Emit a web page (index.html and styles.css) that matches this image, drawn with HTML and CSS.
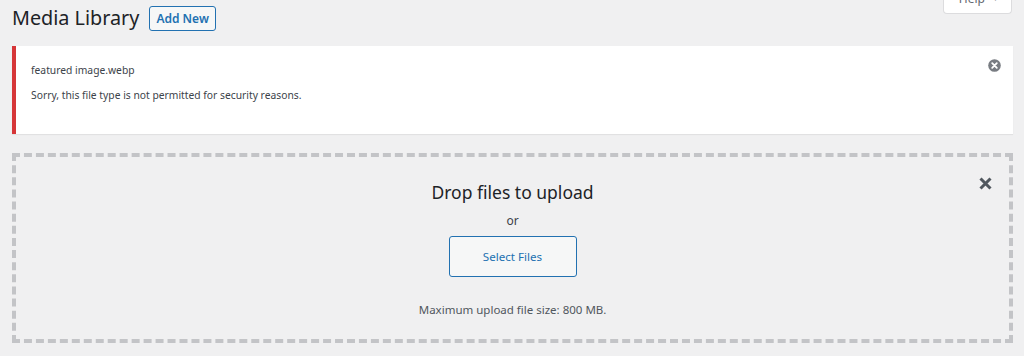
FILE: index.html
```html
<!DOCTYPE html>
<html>
<head>
<meta charset="utf-8">
<link rel="stylesheet" href="styles.css">
</head>
<body>
<div class="wrap">
  <div class="header">
    <div class="title-row">
      <h1 class="title">Media Library</h1>
      <a class="btn-small">Add New</a>
    </div>
    <div class="help-tab">Help <span class="caret">▼</span></div>
  </div>
  <div class="notice">
    <div class="notice-body">
      <div class="fname">featured image.webp</div>
      <div class="msg">Sorry, this file type is not permitted for security reasons.</div>
    </div>
    <span class="dismiss">
      <svg width="13" height="13" viewBox="0 0 13 13"><circle cx="6.5" cy="6.5" r="6.3" fill="#787c82"/><path d="M4.2 4.2 L8.8 8.8 M8.8 4.2 L4.2 8.8" stroke="#fff" stroke-width="1.8" stroke-linecap="round"/></svg>
    </span>
  </div>
  <div class="uploader">
    <div class="close-row">
      <svg width="13" height="13" viewBox="0 0 13 13"><path d="M1.5 1.5 L11.5 11.5 M11.5 1.5 L1.5 11.5" stroke="#50575e" stroke-width="3"/></svg>
    </div>
    <div class="drop-title">Drop files to upload</div>
    <div class="or">or</div>
    <a class="btn-hero">Select Files</a>
    <div class="max">Maximum upload file size: 800 MB.</div>
  </div>
</div>
</body>
</html>
```

FILE: styles.css
```css
html, body {
  margin: 0;
  padding: 0;
  background: #f0f0f1;
}
body {
  font-family: "Noto Sans", "Open Sans", sans-serif;
  color: #3c434a;
  font-size: 13px;
  overflow: hidden;
}
.wrap {
  padding: 0 11px 0 12px;
}
.header {
  display: flex;
  justify-content: space-between;
  align-items: flex-start;
  height: 46px;
}
.title-row {
  display: flex;
  align-items: center;
  gap: 10px;
  padding-top: 5px;
}
.title {
  margin: 0;
  font-size: 19.8px;
  font-weight: 400;
  color: #1d2327;
  line-height: 26px;
}
.btn-small {
  display: inline-block;
  border: 1px solid #2271b1;
  border-radius: 3px;
  background: #f6f7f7;
  color: #2271b1;
  font-size: 12px;
  font-weight: 600;
  padding: 0 6px;
  line-height: 23px;
}
.help-tab {
  margin-top: -14px;
  margin-right: 1px;
  background: #fff;
  border: 1px solid #dcdcde;
  border-top: none;
  border-radius: 0 0 4px 4px;
  color: #646970;
  font-size: 12px;
  padding: 4px 12px 6px 15px;
  line-height: 17px;
}
.caret {
  font-size: 7px;
  vertical-align: 2px;
  margin-left: 4px;
}
.notice {
  display: flex;
  justify-content: space-between;
  background: #fff;
  border-left: 4px solid #d63638;
  box-shadow: 0 1px 1px rgba(0, 0, 0, 0.06);
  height: 88px;
  box-sizing: border-box;
}
.notice-body {
  padding: 16px 15px;
  color: #3c434a;
  font-size: 10.3px;
}
.fname {
  line-height: 16px;
}
.msg {
  line-height: 16px;
  margin-top: 9px;
}
.dismiss {
  padding: 12px 12px 0 0;
}
.uploader {
  margin-top: 19px;
  border: 4px dashed #c3c4c7;
  height: 190px;
  box-sizing: border-box;
  display: flex;
  flex-direction: column;
  align-items: center;
}
.close-row {
  align-self: flex-end;
  padding: 19px 17px 0 0;
  height: 14px;
}
.drop-title {
  margin-top: -11px;
  font-size: 17.5px;
  color: #1d2327;
  line-height: 26px;
}
.or {
  margin-top: 7px;
  font-size: 12px;
  line-height: 18px;
}
.btn-hero {
  margin-top: 6px;
  border: 1px solid #2271b1;
  border-radius: 3px;
  background: #f6f7f7;
  color: #2271b1;
  font-size: 11.6px;
  width: 128px;
  height: 41px;
  box-sizing: border-box;
  display: flex;
  align-items: center;
  justify-content: center;
}
.max {
  margin-top: 24px;
  font-size: 11.5px;
  color: #50575e;
  line-height: 18px;
}
```
